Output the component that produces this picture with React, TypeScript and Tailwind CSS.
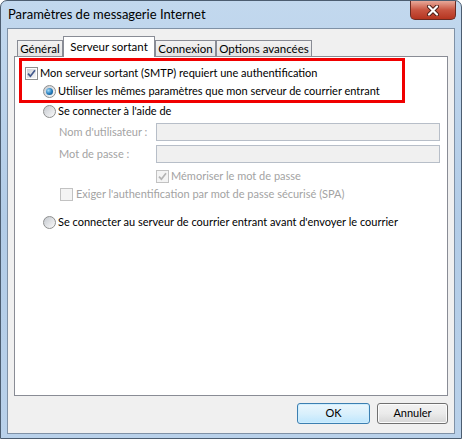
import React from "react";

const Checkbox = ({ checked, disabled }: { checked?: boolean; disabled?: boolean }) => (
  <div
    className={
      disabled
        ? "relative w-[13px] h-[13px] shrink-0 border border-[#c2c2c2] bg-[#f4f4f4]"
        : "relative w-[13px] h-[13px] shrink-0 border border-[#8e8f8f] bg-white p-px"
    }
  >
    <div
      className={
        disabled
          ? "w-full h-full bg-[#f4f4f4]"
          : "w-full h-full bg-gradient-to-br from-[#cdd1d7] to-[#f7f7f7]"
      }
    />
    {checked && (
      <svg className="absolute left-0 top-0" width="11" height="11" viewBox="0 0 11 11">
        <path
          d="M2 5.6 L4.4 8.2 L9 2.2"
          fill="none"
          stroke={disabled ? "#b4b4b4" : "#43598c"}
          strokeWidth="1.7"
        />
      </svg>
    )}
  </div>
);

const Radio = ({ checked }: { checked?: boolean }) => (
  <div className="w-[13px] h-[13px] shrink-0 rounded-full border border-[#8e8f8f] bg-gradient-to-br from-[#c5c9cf] to-[#fbfbfb] flex items-center justify-center">
    {checked && (
      <div className="w-[7px] h-[7px] rounded-full bg-[radial-gradient(circle_at_35%_35%,#a6dcf8,#2a82c2_50%,#0b426f)]" />
    )}
  </div>
);

export default function App() {
  return (
    <div className="w-[462px] h-[439px] flex flex-col rounded-t-[7px] border border-[#4c5d70] bg-gradient-to-b from-[#c2d8ee] via-[#b2cce7] to-[#b9d1ea] overflow-hidden font-[Lato] text-[11px] text-black whitespace-nowrap">
      <div className="h-[27px] shrink-0 flex items-start justify-between">
        <span className="pl-[7px] pt-[5px] text-[13px] leading-[17px] text-black">
          Paramètres de messagerie Internet
        </span>
        <div className="mr-[5px] w-[46px] h-[19px] rounded-b-[5px] border border-t-0 border-[#6b2b22] bg-gradient-to-b from-[#e7a899] via-[#c85440] to-[#b5341f] flex items-center justify-center">
          <svg width="14" height="11" viewBox="0 0 14 11">
            <path d="M3 1.5 L11 9.5 M11 1.5 L3 9.5" stroke="#4a1d16" strokeWidth="4" strokeLinecap="round" />
            <path d="M3 1.5 L11 9.5 M11 1.5 L3 9.5" stroke="#ffffff" strokeWidth="2.2" strokeLinecap="round" />
          </svg>
        </div>
      </div>

      <div className="mx-[6px] h-[406px] shrink-0 border border-[#7f91a6] bg-[#f0f0f0] flex flex-col">
        <div className="pt-[7px] px-[6px] flex flex-col">
          <div className="h-[20px] flex items-end pl-[3px] text-[11.5px]">
            <div className="w-[46px] h-[16px] border border-b-0 border-[#898c95] bg-gradient-to-b from-[#f2f2f2] to-[#e3e3e3] flex items-center justify-center leading-[14px]">
              Général
            </div>
            <div className="relative z-10 -mb-px w-[92px] h-[21px] border border-b-0 border-[#898c95] bg-white flex items-start justify-center pt-[2px] leading-[15px]">
              Serveur sortant
            </div>
            <div className="w-[61px] h-[16px] border border-b-0 border-[#898c95] bg-gradient-to-b from-[#f2f2f2] to-[#e3e3e3] flex items-center justify-center leading-[14px]">
              Connexion
            </div>
            <div className="w-[96px] h-[16px] border border-b-0 border-[#898c95] bg-gradient-to-b from-[#f2f2f2] to-[#e3e3e3] flex items-center justify-center leading-[14px]">
              Options avancées
            </div>
          </div>

          <div className="h-[340px] border border-[#898c95] bg-white flex flex-col">
            <div className="ml-[4px] mt-[1px] w-[386px] h-[45px] border-[3px] border-[#f00000] flex flex-col">
              <div className="h-[18px] mt-[3px] flex items-center pl-[3px] gap-[2px]">
                <Checkbox checked />
                <span>Mon serveur sortant (SMTP) requiert une authentification</span>
              </div>
              <div className="h-[18px] flex items-center pl-[21px] gap-[2px]">
                <Radio checked />
                <span>Utiliser les mêmes paramètres que mon serveur de courrier entrant</span>
              </div>
            </div>

            <div className="h-[16px] flex items-center pl-[28px] gap-[2px]">
              <Radio />
              <span>Se connecter à l'aide de</span>
            </div>

            <div className="mt-[4px] h-[18px] flex items-center pl-[44px]">
              <span className="w-[97px] text-[#a3a3a3]">Nom d'utilisateur :</span>
              <div className="w-[284px] h-[18px] border border-[#b7bec8] bg-[#f0f0f0]" />
            </div>
            <div className="mt-[4px] h-[18px] flex items-center pl-[44px]">
              <span className="w-[97px] text-[#a3a3a3]">Mot de passe :</span>
              <div className="w-[284px] h-[18px] border border-[#b7bec8] bg-[#f0f0f0]" />
            </div>

            <div className="mt-[4px] h-[18px] flex items-center pl-[141px] gap-[2px]">
              <Checkbox checked disabled />
              <span className="text-[#a3a3a3]">Mémoriser le mot de passe</span>
            </div>
            <div className="h-[18px] flex items-center pl-[45px] gap-[3px]">
              <Checkbox disabled />
              <span className="text-[#a3a3a3]">Exiger l'authentification par mot de passe sécurisé (SPA)</span>
            </div>

            <div className="mt-[10px] h-[18px] flex items-center pl-[28px] gap-[2px]">
              <Radio />
              <span>Se connecter au serveur de courrier entrant avant d'envoyer le courrier</span>
            </div>
          </div>
        </div>

        <div className="mt-[7px] flex justify-end gap-[7px] pr-[6px]">
          <div className="w-[73px] h-[21px] rounded-[3px] border border-[#3c7fb1] bg-gradient-to-b from-[#eaf6fd] via-[#d9f0fc] to-[#bee6fd] shadow-[inset_0_0_0_1px_#cfeefe] flex items-center justify-center">
            OK
          </div>
          <div className="w-[71px] h-[21px] rounded-[3px] border border-[#707070] bg-gradient-to-b from-[#f2f2f2] via-[#ebebeb] to-[#d6d6d6] shadow-[inset_0_0_0_1px_#fcfcfc] flex items-center justify-center">
            Annuler
          </div>
        </div>
      </div>
    </div>
  );
}
